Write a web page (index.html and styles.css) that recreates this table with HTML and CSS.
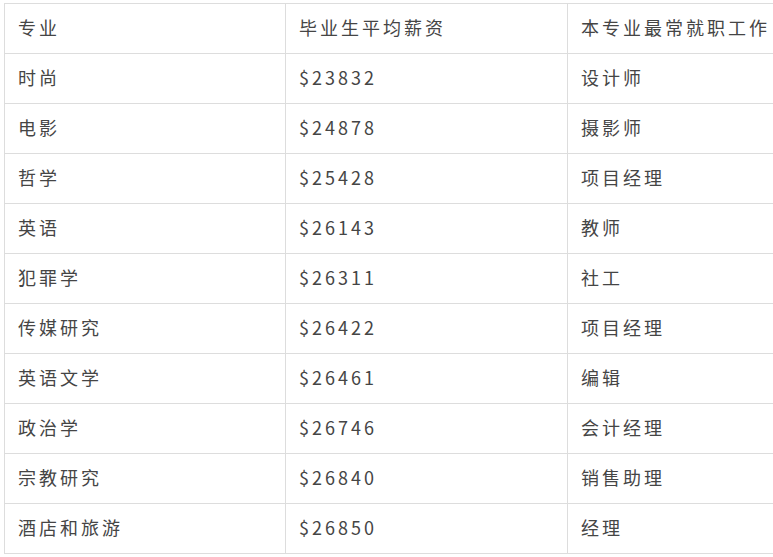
FILE: index.html
```html
<!DOCTYPE html>
<html lang="zh">
<head>
<meta charset="utf-8">
<link rel="stylesheet" href="styles.css">
</head>
<body>
<table class="salary">
<colgroup><col class="c1"><col class="c2"><col class="c3"></colgroup>
<tr><td>专业</td><td>毕业生平均薪资</td><td>本专业最常就职工作</td></tr>
<tr><td>时尚</td><td>$23832</td><td>设计师</td></tr>
<tr><td>电影</td><td>$24878</td><td>摄影师</td></tr>
<tr><td>哲学</td><td>$25428</td><td>项目经理</td></tr>
<tr><td>英语</td><td>$26143</td><td>教师</td></tr>
<tr><td>犯罪学</td><td>$26311</td><td>社工</td></tr>
<tr><td>传媒研究</td><td>$26422</td><td>项目经理</td></tr>
<tr><td>英语文学</td><td>$26461</td><td>编辑</td></tr>
<tr><td>政治学</td><td>$26746</td><td>会计经理</td></tr>
<tr><td>宗教研究</td><td>$26840</td><td>销售助理</td></tr>
<tr><td>酒店和旅游</td><td>$26850</td><td>经理</td></tr>
</table>
</body>
</html>
```

FILE: styles.css
```css
html, body {
  margin: 0;
  padding: 0;
  overflow: hidden;
  background: #ffffff;
}
body {
  padding: 3px 0 0 4px;
  font-family: "Noto Sans CJK SC", "Noto Sans", sans-serif;
}
.salary {
  border-collapse: collapse;
  table-layout: fixed;
  width: 845px;
}
.c1 { width: 281px; }
.c2 { width: 282px; }
.c3 { width: 282px; }
.salary td {
  height: 50px;
  box-sizing: border-box;
  border: 1px solid #dddddd;
  padding: 0 0 3px 13px;
  font-size: 18px;
  letter-spacing: 3px;
  color: #454545;
  white-space: nowrap;
  vertical-align: middle;
  line-height: 24px;
}
```
